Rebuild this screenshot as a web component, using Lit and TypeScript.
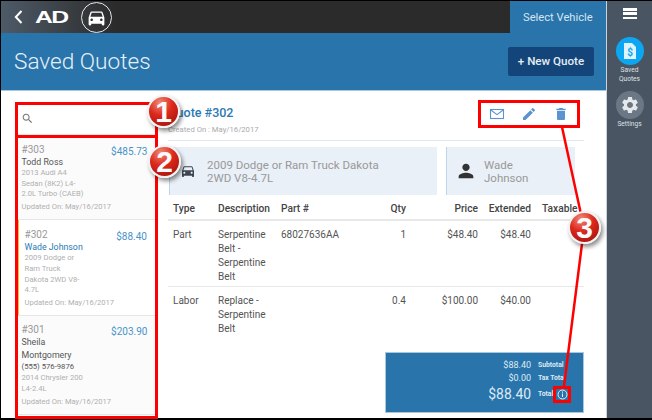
import { LitElement, html, css, svg } from "lit";
import { customElement } from "lit/decorators.js";

const P = {
  car: "M18.92 6.01C18.72 5.42 18.16 5 17.5 5h-11c-.66 0-1.21.42-1.42 1.01L3 12v8c0 .55.45 1 1 1h1c.55 0 1-.45 1-1v-1h12v1c0 .55.45 1 1 1h1c.55 0 1-.45 1-1v-8l-2.08-5.99zM6.5 16c-.83 0-1.5-.67-1.5-1.5S5.67 13 6.5 13s1.5.67 1.5 1.5S7.33 16 6.5 16zm11 0c-.83 0-1.5-.67-1.5-1.5s.67-1.5 1.5-1.5 1.5.67 1.5 1.5-.67 1.5-1.5 1.5zM5 11l1.5-4.5h11L19 11H5z",
  person: "M12 12c2.21 0 4-1.79 4-4s-1.79-4-4-4-4 1.79-4 4 1.79 4 4 4zm0 2c-2.67 0-8 1.34-8 4v2h16v-2c0-2.66-5.33-4-8-4z",
  edit: "M3 17.25V21h3.75L17.81 9.94l-3.75-3.75L3 17.25zM20.71 7.04c.39-.39.39-1.02 0-1.41l-2.34-2.34c-.39-.39-1.02-.39-1.41 0l-1.83 1.83 3.75 3.75 1.83-1.83z",
  del: "M6 19c0 1.1.9 2 2 2h8c1.1 0 2-.9 2-2V7H6v12zM19 4h-3.5l-1-1h-5l-1 1H5v2h14V4z",
  search: "M15.5 14h-.79l-.28-.27C15.41 12.59 16 11.11 16 9.5 16 5.91 13.09 3 9.5 3S3 5.91 3 9.5 5.91 16 9.5 16c1.61 0 3.09-.59 4.23-1.57l.27.28v.79l5 4.99L20.49 19l-4.99-5zm-6 0C7.01 14 5 11.99 5 9.5S7.01 5 9.5 5 14 7.01 14 9.5 11.99 14 9.5 14z",
  gear: "M19.14 12.94c.04-.3.06-.61.06-.94 0-.32-.02-.64-.07-.94l2.03-1.58c.18-.14.23-.41.12-.61l-1.92-3.32c-.12-.22-.37-.29-.59-.22l-2.39.96c-.5-.38-1.03-.7-1.62-.94l-.36-2.54c-.04-.24-.24-.41-.48-.41h-3.84c-.24 0-.43.17-.47.41l-.36 2.54c-.59.24-1.13.57-1.62.94l-2.39-.96c-.22-.08-.47 0-.59.22L2.74 8.87c-.12.21-.08.47.12.61l2.03 1.58c-.05.3-.09.63-.09.94s.02.64.07.94l-2.03 1.58c-.18.14-.23.41-.12.61l1.92 3.32c.12.22.37.29.59.22l2.39-.96c.5.38 1.03.7 1.62.94l.36 2.54c.05.24.24.41.48.41h3.84c.24 0 .44-.17.47-.41l.36-2.54c.59-.24 1.13-.56 1.62-.94l2.39.96c.22.08.47 0 .59-.22l1.92-3.32c.12-.22.07-.47-.12-.61l-2.01-1.58zM12 15.6c-1.98 0-3.6-1.62-3.6-3.6s1.62-3.6 3.6-3.6 3.6 1.62 3.6 3.6-1.62 3.6-3.6 3.6z",
};
const icon = (d: string, size: number, fill: string) => html`<svg width=${size} height=${size} viewBox="0 0 24 24" fill=${fill}><path d=${d}></path></svg>`;

type Quote = { no: string; price: string; name: string[]; phone?: string; car: string[]; active?: boolean };
const QUOTES: Quote[] = [
  { no: "#303", price: "$485.73", name: ["Todd Ross"], car: ["2013 Audi A4", "Sedan (8K2) L4-", "2.0L Turbo (CAEB)"] },
  { no: "#302", price: "$88.40", name: ["Wade Johnson"], car: ["2009 Dodge or", "Ram Truck", "Dakota 2WD V8-", "4.7L"], active: true },
  { no: "#301", price: "$203.90", name: ["Sheila", "Montgomery"], phone: "(555) 576-9876", car: ["2014 Chrysler 200", "L4-2.4L"] },
];

@customElement("app-root")
export class AppRoot extends LitElement {
  static styles = css`
    :host { display: block; width: 652px; height: 420px; font-family: Roboto, "Liberation Sans", sans-serif; overflow: hidden; }
    * { box-sizing: border-box; }
    .app { position: relative; width: 652px; height: 420px; background: #000; padding: 1px 0 2px 1px; display: flex; }
    .main { width: 606px; display: flex; flex-direction: column; background: #fff; border-right: 1px solid #c9d3dc; }
    .top { height: 32px; flex: none; display: flex; background: linear-gradient(90deg, #4d5a68 0, #3c4248 60px, #2b2b2b 115px); }
    .top-left { flex: 1; display: flex; align-items: center; padding-left: 13px; }
    .back { width: 9px; height: 14px; }
    .logo { margin-left: 12px; width: 35px; color: #fff; font: 900 16.5px/1 "Liberation Sans", sans-serif; letter-spacing: -1px; transform: scaleX(1.5); transform-origin: left center; }
    .car { margin-left: 11px; width: 31px; height: 31px; border-radius: 50%; border: 1px solid #e8e8e8; display: flex; align-items: center; justify-content: center; }
    .select { width: 96px; background: #2874ab; color: #d6e5f1; font-size: 11.2px; display: flex; align-items: center; padding: 1px 0 0 13px; }
    .head { height: 58px; flex: none; background: #2874ab; border-bottom: 1px solid #a9c8de; display: flex; align-items: center; justify-content: space-between; padding: 0 12px 1px 13px; }
    h1 { margin: 0; font-size: 22.6px; font-weight: 300; color: #e6f0f7; }
    .new { height: 29px; width: 86px; background: #13457a; border-radius: 2px; color: #e6edf4; font-size: 11.6px; font-weight: 500; display: flex; align-items: center; justify-content: center; }
    .body { flex: 1; display: flex; min-height: 0; padding-left: 16px; }
    .left { width: 139px; display: flex; flex-direction: column; padding-top: 11px; }
    .search { height: 33px; flex: none; display: flex; align-items: center; padding-left: 4px; border-bottom: 1px solid #e8e8e8; }
    .quote { padding: 7.5px 9px 6px 4.5px; background: #fbfbfb; border-bottom: 1px solid #e6e6e6; display: flex; justify-content: space-between; flex: none; }
    .quote.active { background: #fff; border-left: 2px solid #f0b840; padding-left: 5.5px; }
    .no { font-size: 10px; line-height: 13px; color: #999; }
    .name { font-size: 8.8px; line-height: 12.5px; color: #555; }
    .active .name { color: #2a7ab5; }
    .phone { font-size: 7.7px; line-height: 12px; color: #555; }
    .info { font-size: 7.6px; line-height: 10.7px; color: #b0b0b0; }
    .upd { font-size: 7.6px; line-height: 12px; color: #b0b0b0; margin-top: 1px; white-space: nowrap; }
    .price { font-size: 10px; line-height: 14px; color: #4a93c8; margin-top: 2px; }
    .right { width: 416px; margin-left: 12px; display: flex; flex-direction: column; padding-top: 13px; }
    .qhead { height: 37px; flex: none; border-bottom: 1px solid #dfe8ef; display: flex; justify-content: space-between; }
    .qt { font-size: 12.5px; font-weight: 500; color: #2a7ab5; line-height: 18px; }
    .qc { font-size: 7.7px; color: #aaa; line-height: 12px; margin-top: 2px; }
    .acts { display: flex; gap: 16px; padding: 2px 15px 0 0; align-items: flex-start; }
    .cards { display: flex; gap: 9px; margin-top: 6px; padding-left: 1px; }
    .card { height: 48px; background: #e9f0f7; border-left: 1px solid #bcd5ea; display: flex; align-items: center; color: #999; font-size: 11.5px; line-height: 13px; }
    .card div { padding-top: 1px; }
    .c1 { width: 268px; padding-left: 10px; gap: 11px; }
    .c2 { width: 129px; padding-left: 8px; gap: 7px; }
    .row { display: grid; grid-template-columns: 45px 63px 98px 27px 72px 53px 53px; padding-left: 5px; color: #555; font-size: 10px; line-height: 14px; }
    .thead { margin-top: 5px; height: 21px; padding-top: 1px; border-bottom: 2px solid #e8e8e8; color: #444; font-weight: 500; font-size: 10.2px; line-height: 15px; }
    .r { text-align: right; }
    .tx { padding-left: 11px; }
    .desc { padding-right: 6px; }
    .tr { padding-top: 7px; padding-bottom: 2px; border-bottom: 1px solid #e8e8e8; }
    .tr.last { border: 0; padding-bottom: 0; }
    .spacer { flex: 1; }
    .totals { margin: 0 0 5px 217px; width: 199px; height: 61px; flex: none; background: #2874ab; border: 1px solid #a9c8de; color: #dfeaf3; padding: 5px 0 0 0; display: grid; grid-template-columns: 145px 1fr; grid-template-rows: 13px 13px 20px; column-gap: 7px; align-items: center; }
    .amt { text-align: right; font-size: 9px; }
    .amt.big { font-size: 13.9px; }
    .lbl { font-size: 6.8px; font-weight: 700; display: flex; align-items: center; gap: 4px; white-space: nowrap; }
    .side { flex: 1; background: #4a5563; display: flex; flex-direction: column; align-items: center; color: #dde2e7; font-size: 6.6px; line-height: 9px; text-align: center; }
    .burger { margin-top: 7px; width: 14px; height: 11px; display: flex; flex-direction: column; justify-content: space-between; }
    .burger i { display: block; height: 2.500px; background: #fff; }
    .circ { width: 28px; height: 28px; border-radius: 50%; display: flex; align-items: center; justify-content: center; margin-bottom: 1px; }
    .c-blue { background: #0ca7f2; margin-top: 18px; }
    .c-grey { background: #6c7785; margin-top: 7px; }
    .overlay { position: absolute; left: 0; top: 0; pointer-events: none; }
    .badge { position: absolute; width: 33px; height: 33px; border-radius: 50%; border: 2px solid #f2f2f2; background: radial-gradient(circle at 38% 20%, #f08a78 0, #dc2a1c 42%, #b01510 82%, #d8493c 100%); box-shadow: 2px 3px 4px rgba(0,0,0,.45); color: #fafafa; font: 900 30px/29px "Liberation Sans", sans-serif; text-align: center; }
    .b1 { left: 147px; top: 95px; }
    .b2 { left: 148px; top: 145px; }
    .b3 { left: 568px; top: 211px; }
  `;

  render() {
    return html`<div class="app">
      <div class="main">
        <div class="top">
          <div class="top-left">
            <svg class="back" viewBox="0 0 9 14" fill="none" stroke="#fff" stroke-width="2"><path d="M7.5 1 1.8 7l5.700 6"></path></svg>
            <div class="logo">AD</div>
            <div class="car">${icon(P.car, 21, "#fff")}</div>
          </div>
          <div class="select">Select Vehicle</div>
        </div>
        <div class="head"><h1>Saved Quotes</h1><div class="new">+ New Quote</div></div>
        <div class="body">
          <div class="left">
            <div class="search">${icon(P.search, 13, "#777")}</div>
            ${QUOTES.map((q) => html`<div class="quote ${q.active ? "active" : ""}">
              <div>
                <div class="no">${q.no}</div>
                ${q.name.map((n) => html`<div class="name">${n}</div>`)}
                ${q.phone ? html`<div class="phone">${q.phone}</div>` : ""}
                ${q.car.map((n) => html`<div class="info">${n}</div>`)}
                <div class="upd">Updated On: May/16/2017</div>
              </div>
              <div class="price">${q.price}</div>
            </div>`)}
          </div>
          <div class="right">
            <div class="qhead">
              <div><div class="qt">Quote #302</div><div class="qc">Created On : May/16/2017</div></div>
              <div class="acts">
                <svg width="16" height="16" viewBox="0 0 16 16" fill="none" stroke="#5b94d0" stroke-width="1.1"><rect x="1.5" y="3.500" width="13" height="9"></rect><path d="M1.5 3.800 8 8.600l6.500-4.800"></path></svg>
                ${icon(P.edit, 16, "#5b94d0")}
                ${icon(P.del, 16, "#5b94d0")}
              </div>
            </div>
            <div class="cards">
              <div class="card c1">${icon(P.car, 16, "#3d4650")}<div>2009 Dodge or Ram Truck Dakota<br />2WD V8-4.7L</div></div>
              <div class="card c2">${icon(P.person, 22, "#333")}<div>Wade<br />Johnson</div></div>
            </div>
            <div class="row thead"><div>Type</div><div>Description</div><div>Part #</div><div class="r">Qty</div><div class="r">Price</div><div class="r">Extended</div><div class="tx">Taxable</div></div>
            <div class="row tr"><div>Part</div><div class="desc">Serpentine Belt - Serpentine Belt</div><div>68027636AA</div><div class="r">1</div><div class="r">$48.40</div><div class="r">$48.40</div><div></div></div>
            <div class="row tr last"><div>Labor</div><div class="desc">Replace - Serpentine Belt</div><div></div><div class="r">0.4</div><div class="r">$100.00</div><div class="r">$40.00</div><div></div></div>
            <div class="spacer"></div>
            <div class="totals">
              <div class="amt">$88.40</div><div class="lbl">Subtotal</div>
              <div class="amt">$0.00</div><div class="lbl">Tax Total</div>
              <div class="amt big">$88.40</div><div class="lbl">Total
                <svg width="11" height="11" viewBox="0 0 11 11" fill="none" stroke="#e8f0f6"><circle cx="5.500" cy="5.500" r="4.500"></circle><path d="M5.500 4.500v3.500M5.500 2.500v1.200"></path></svg>
              </div>
            </div>
          </div>
        </div>
      </div>
      <div class="side">
        <div class="burger"><i></i><i></i><i></i></div>
        <div class="circ c-blue">
          <svg width="16" height="18" viewBox="0 0 16 18"><path fill="#dff3fd" d="M2 1h8l4 4v12H2z"></path><text x="8" y="14" font-size="10" font-weight="700" text-anchor="middle" fill="#0ca7f2" font-family="Roboto">$</text></svg>
        </div>
        <div>Saved<br />Quotes</div>
        <div class="circ c-grey">${icon(P.gear, 20, "#e6e9ec")}</div>
        <div>Settings</div>
      </div>
      ${svg`<svg class="overlay" width="652" height="420" fill="none" stroke="#f00" stroke-width="3">
        <rect x="16.500" y="103.500" width="140" height="33"></rect>
        <rect x="16.500" y="136.500" width="140" height="281"></rect>
        <rect x="479.500" y="101.500" width="99" height="25"></rect>
        <rect x="554.500" y="387.500" width="15" height="14"></rect>
        <path d="M562 127 584 228 564 386" stroke-width="2.500"></path>
      </svg>`}
      <div class="badge b1">1</div>
      <div class="badge b2">2</div>
      <div class="badge b3">3</div>
    </div>`;
  }
}
